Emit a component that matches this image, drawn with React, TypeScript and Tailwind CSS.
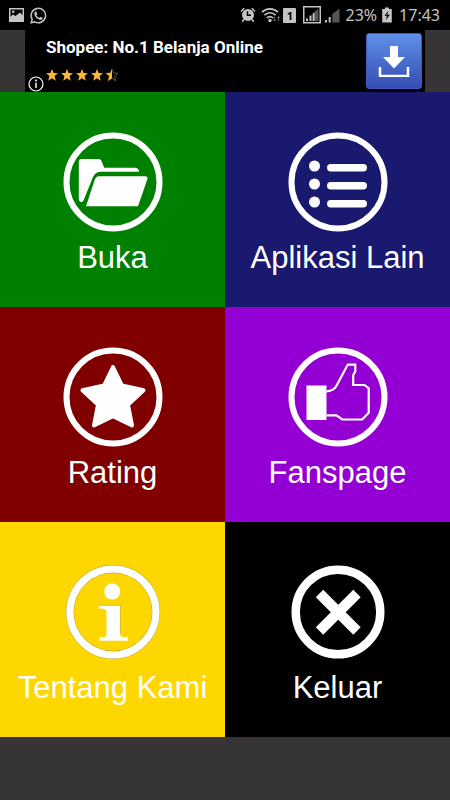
import type { ReactNode } from "react";

const STAR = "M6 0 7.6 4 12 4.300 8.600 7.100 9.800 11.700 6 9.200 2.200 11.700 3.400 7.100 0 4.300 4.400 4Z";

function Ring({ radius, width }: { radius: number; width: number }) {
  return <circle cx="50" cy="50" r={radius} fill="none" stroke="white" strokeWidth={width} />;
}

function Tile({ label, color, children }: { label: string; color: string; children: ReactNode }) {
  return (
    <button type="button" className={`flex h-[215px] flex-col items-center pt-10 text-white ${color}`}>
      <svg viewBox="0 0 100 100" className="size-[100px] shrink-0" fill="white" aria-hidden="true">
        {children}
      </svg>
      <span className="mt-2 text-[31px] leading-9 whitespace-nowrap">{label}</span>
    </button>
  );
}

function StatusBar() {
  return (
    <header className="flex h-[30px] items-center justify-between bg-black pr-[10px] pl-[9px] text-[#c4c4c4]">
      <div className="flex items-center gap-[6px]">
        <svg viewBox="0 0 15 14" className="h-[14px] w-[15px]" aria-label="Image">
          <rect x="0.75" y="0.75" width="13.5" height="12.5" fill="none" stroke="currentColor" strokeWidth="1.5" />
          <path d="M1 9 4 6.5 6.5 8 11 4.5 14 7.5V13H1Z" fill="currentColor" />
          <circle cx="4.2" cy="3.8" r="1.3" fill="currentColor" />
        </svg>
        <svg viewBox="0 0 17 17" className="size-[17px]" aria-label="WhatsApp">
          <path d="M1.2 15.8 2.2 12.2A7.2 7.2 0 1 1 4.9 14.8Z" fill="none" stroke="currentColor" strokeWidth="1.5" />
          <path d="M6 4.3 7.3 7 6.4 8.2C7 9.5 8 10.3 9.3 10.8L10.4 9.7 12.8 11C12.5 12.6 11 13.2 9.7 12.8 7 12 5 10 4.4 7.2 4.2 5.8 4.9 4.5 6 4.3Z" fill="currentColor" />
        </svg>
      </div>
      <div className="flex items-center">
        <svg viewBox="0 0 16 16" className="size-4" aria-label="Alarm">
          <circle cx="8" cy="8" r="6" fill="currentColor" />
          <path d="M1 4.5 4.3 1.2M15 4.5 11.7 1.2M3.8 12.5 2.2 14.8M12.2 12.5 13.8 14.8" stroke="currentColor" strokeWidth="1.6" />
          <path d="M7.5 4.3V8.3H11" fill="none" stroke="black" strokeWidth="1.5" />
        </svg>
        <svg viewBox="0 0 20 16" className="ml-[5px] h-4 w-5" aria-label="Wi-Fi">
          <g fill="none" stroke="currentColor" strokeWidth="1.7">
            <path d="M1 5.2C5.5 0.8 12.5 0.8 17 5.2" />
            <path d="M3.4 8.2C6.8 5 11.2 5 14.6 8.2" />
            <path d="M5.8 11C7.8 9.2 10.2 9.2 12 11" />
          </g>
          <circle cx="9" cy="13.5" r="1.7" fill="currentColor" />
          <path d="M13.5 9.5V14M12 12.5 13.5 14 15 12.5M17.5 14V9.5M16 11 17.5 9.5 19 11" fill="none" stroke="#666" />
        </svg>
        <span className="ml-[2px] flex h-[15px] w-[13px] items-center justify-center rounded-[1px] bg-[#c4c4c4] font-['Noto_Sans',sans-serif] text-[11px] leading-none font-bold text-black">
          1
        </span>
        <svg viewBox="0 0 18 18" className="ml-[7px] size-[18px]" aria-label="Signal SIM 1">
          <rect x="0.75" y="0.75" width="16.5" height="16" fill="none" stroke="currentColor" strokeWidth="1.5" />
          <path d="M3 12.5H5V15H3ZM6.5 9.5H8.5V15H6.5Z" fill="currentColor" />
          <path d="M10 7 15.5 2.5V15H10Z" fill="#555" />
          <path d="M9.6 7.5H11.5V15H9.6Z" fill="currentColor" />
        </svg>
        <svg viewBox="0 0 16 16" className="ml-[3px] size-4" aria-label="Signal SIM 2">
          <path d="M1 13H3V15.5H1ZM4.7 10H6.7V15.5H4.7Z" fill="currentColor" />
          <path d="M8.3 7 15.5 1.5V15.5H8.3Z" fill="#555" />
        </svg>
        <span className="ml-[5px] font-['Noto_Sans',sans-serif] text-[16px] leading-5">23%</span>
        <svg viewBox="0 0 10 16" className="ml-[5px] h-4 w-[10px]" aria-label="Battery charging">
          <path d="M3 0.5H7V2H9.8V15.5H0.2V2H3Z" fill="currentColor" />
          <path d="M6.5 3.8 2.5 8.8H5L3.7 13.3 7.8 7.8H5.2Z" fill="black" />
        </svg>
        <time className="ml-[7px] font-['Noto_Sans',sans-serif] text-[16px] leading-5">17:43</time>
      </div>
    </header>
  );
}

function AdBanner() {
  return (
    <section className="relative mx-auto flex h-[62px] w-full max-w-[400px] justify-between bg-black pt-[3px] pr-[3px] pl-[21px]">
      <div className="flex flex-col">
        <h1 className="mt-1 font-[Roboto,sans-serif] text-[17px] leading-5 font-bold whitespace-nowrap text-white">
          Shopee: No.1 Belanja Online
        </h1>
        <div className="mt-3 flex gap-[3px]" role="img" aria-label="4.5">
          {[0, 1, 2, 3].map((i) => (
            <svg key={i} viewBox="0 0 12 12" className="size-3" fill="#fdb63a">
              <path d={STAR} />
            </svg>
          ))}
          <svg viewBox="0 0 12 12" className="size-3">
            <path d={STAR} fill="none" stroke="#8a6424" strokeWidth="0.8" />
            <path d="M6 0V9.200L2.200 11.700 3.400 7.100 0 4.300 4.400 4Z" fill="#fdb63a" />
          </svg>
        </div>
      </div>
      <button
        type="button"
        aria-label="Install"
        className="flex size-14 items-center justify-center rounded-[3px] border border-[#3c5cc4] bg-linear-to-b from-[#6090e8] to-[#364cb4]"
      >
        <svg viewBox="0 0 32 32" className="size-8" aria-hidden="true">
          <path d="M12 1H20V12H27L16 23.5 5 12H12Z" fill="white" />
          <path d="M2 22V31H30V22" fill="none" stroke="white" strokeWidth="2.5" />
        </svg>
      </button>
      <button type="button" aria-label="Ad info" className="absolute bottom-0 left-[3px]">
        <svg viewBox="0 0 16 16" className="size-4">
          <circle cx="8" cy="8" r="7" fill="black" stroke="white" strokeWidth="1.2" />
          <path d="M8 6.8V12" stroke="white" strokeWidth="1.5" />
          <circle cx="8" cy="4.5" r="1" fill="white" />
        </svg>
      </button>
    </section>
  );
}

export default function App() {
  return (
    <div className="min-h-screen bg-[#373435] font-['Liberation_Sans',Arial,sans-serif]">
      <StatusBar />
      <AdBanner />
      <main className="grid grid-cols-2">
        <Tile label="Buka" color="bg-[#008000]">
          <Ring radius={46.5} width={6} />
          <path d="M18 27H36Q37.5 27 38.3 28.5L41.2 35.7H72Q76 36 76 39.7H38Q32.500 39.7 30 45L20.500 68.500Q19 71 17 69.500L15.800 68V29.500Q15.800 27 18 27Z" />
          <path d="M36 44.300H82Q85.300 44.300 84.300 47.500L75 74.300H23L31.500 48.500Q33 44.300 36 44.300Z" />
        </Tile>
        <Tile label="Aplikasi Lain" color="bg-[#191970]">
          <Ring radius={46.5} width={6} />
          {[34, 52, 70].map((y) => (
            <g key={y}>
              <circle cx="26.5" cy={y} r="5.5" />
              <rect x="39" y={y - 2} width="40" height="7.4" rx="3.7" />
            </g>
          ))}
        </Tile>
        <Tile label="Rating" color="bg-[#800000]">
          <Ring radius={46.5} width={6} />
          <path
            d="M50 20 59 38.500 80.500 43.200 65 57.800 69 78.500 50 69.300 31 78.500 35 57.800 19.500 43.200 41 38.500Z"
            stroke="white"
            strokeWidth="4"
            strokeLinejoin="round"
          />
        </Tile>
        <Tile label="Fanspage" color="bg-[#9400d3]">
          <Ring radius={46.5} width={6} />
          <rect x="18.5" y="38.5" width="20" height="34.5" />
          <path
            d="M38.500 44.300Q46 43.500 48.500 38.700L59.800 17.600H67.300V24.500L65.200 28V38H76.500L80.700 41.300V65.700L74.200 72.500H54.200L48.500 68.300H38.500"
            fill="none"
            stroke="white"
            strokeWidth="2.2"
          />
        </Tile>
        <Tile label="Tentang Kami" color="bg-[#ffd700]">
          <circle cx="50" cy="50" r="43" fill="none" stroke="#b59a2c" strokeWidth="8" />
          <Ring radius={43} width={7.2} />
          <circle cx="49.2" cy="29.5" r="8" />
          <path d="M35.800 43.500H57.200V72Q57.200 75.300 61 75.300H64.800V78.700H36.500V75.300H40Q43.500 75 43.500 72V50Q43.500 47 40 46.800L35.800 46.500Z" />
          <path d="M35.800 43.300H57.400V72" fill="none" stroke="#b59a2c" strokeWidth="0.5" />
        </Tile>
        <Tile label="Keluar" color="bg-black">
          <Ring radius={42.3} width={8.4} />
          <path d="M31.500 31.500 69 69M69 31.500 31.500 69" stroke="white" strokeWidth="10.500" />
        </Tile>
      </main>
    </div>
  );
}
